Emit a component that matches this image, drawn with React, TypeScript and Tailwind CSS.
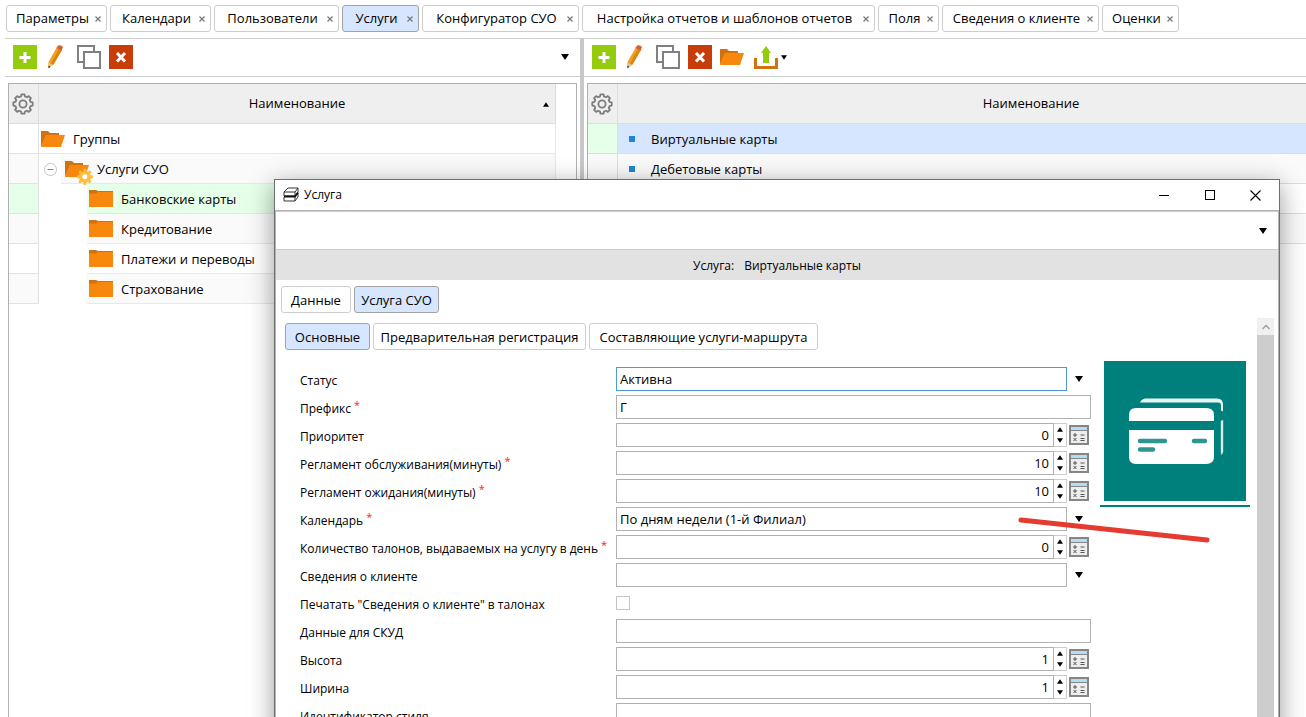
import React, { useState } from "react";

interface TabItem {
  name: string;
  width: string;
}

interface TreeItem {
  name: string;
  indent: string;
  icon: "open" | "gear" | "closed";
  bg: string;
}

interface Field {
  id: string;
  label: string;
  kind: "select" | "text" | "number" | "checkbox";
  value?: string;
  required?: boolean;
  active?: boolean;
}

const tabs: TabItem[] = [
  { name: "Параметры", width: "w-[101px]" },
  { name: "Календари", width: "w-[101px]" },
  { name: "Пользователи", width: "w-[125px]" },
  { name: "Услуги", width: "w-[77px]" },
  { name: "Конфигуратор СУО", width: "w-[157px]" },
  { name: "Настройка отчетов и шаблонов отчетов", width: "w-[293px]" },
  { name: "Поля", width: "w-[61px]" },
  { name: "Сведения о клиенте", width: "w-[157px]" },
  { name: "Оценки", width: "w-[77px]" },
];

const tree: TreeItem[] = [
  { name: "Группы", indent: "pl-0", icon: "open", bg: "bg-white" },
  { name: "Услуги СУО", indent: "pl-6", icon: "gear", bg: "bg-[#fafafa]" },
  { name: "Банковские карты", indent: "pl-12", icon: "closed", bg: "bg-[#e5ffe8]" },
  { name: "Кредитование", indent: "pl-12", icon: "closed", bg: "bg-[#fafafa]" },
  { name: "Платежи и переводы", indent: "pl-12", icon: "closed", bg: "bg-white" },
  { name: "Страхование", indent: "pl-12", icon: "closed", bg: "bg-[#fafafa]" },
];

const services = ["Виртуальные карты", "Дебетовые карты", "", ""];

const fields: Field[] = [
  { id: "status", label: "Статус", kind: "select", value: "Активна", active: true },
  { id: "prefix", label: "Префикс", kind: "text", value: "Г", required: true },
  { id: "priority", label: "Приоритет", kind: "number", value: "0" },
  { id: "serve", label: "Регламент обслуживания(минуты)", kind: "number", value: "10", required: true },
  { id: "wait", label: "Регламент ожидания(минуты)", kind: "number", value: "10", required: true },
  { id: "calendar", label: "Календарь", kind: "select", value: "По дням недели (1-й Филиал)", required: true },
  { id: "tickets", label: "Количество талонов, выдаваемых на услугу в день", kind: "number", value: "0", required: true },
  { id: "client", label: "Сведения о клиенте", kind: "select", value: "" },
  { id: "print", label: 'Печатать "Сведения о клиенте" в талонах', kind: "checkbox" },
  { id: "skud", label: "Данные для СКУД", kind: "text", value: "" },
  { id: "height", label: "Высота", kind: "number", value: "1" },
  { id: "width", label: "Ширина", kind: "number", value: "1" },
  { id: "style", label: "Идентификатор стиля", kind: "text", value: "" },
];

// outline of a cog with eight teeth around (12, 12)
const cogPoints = (outer: number, inner: number) =>
  Array.from({ length: 8 })
    .flatMap((_, i) =>
      [
        [-15, inner],
        [-9, outer],
        [9, outer],
        [15, inner],
      ].map(([deg, r]) => {
        const a = ((i * 45 + deg) * Math.PI) / 180;
        return `${(12 + r * Math.sin(a)).toFixed(2)},${(12 - r * Math.cos(a)).toFixed(2)}`;
      })
    )
    .join(" ");

function Cog() {
  return (
    <svg className="ml-[2px] block h-6 w-6" viewBox="0 0 24 24" fill="none" stroke="#7c7c7c" strokeWidth="1.8" strokeLinejoin="round">
      <polygon points={cogPoints(9.8, 7.8)} />
      <circle cx="12" cy="12" r="3.6" />
    </svg>
  );
}

function Down({ small }: { small?: boolean }) {
  return (
    <svg className={small ? "h-[5px] w-[6px]" : "h-[6px] w-[8px]"} viewBox="0 0 8 6">
      <path d="M0 0h8L4 6z" />
    </svg>
  );
}

function Up() {
  return (
    <svg className="h-[5px] w-[6px]" viewBox="0 0 8 6">
      <path d="M0 6h8L4 0z" />
    </svg>
  );
}

function OpenFolder() {
  return (
    <svg className="h-4 w-6" viewBox="0 0 24 16">
      <path d="M0 0h7l2 2h9v3H5L0 16z" fill="#d0720f" />
      <path d="M5 4h19l-4 12H0z" fill="#f7870d" />
    </svg>
  );
}

function FolderIcon({ icon }: { icon: TreeItem["icon"] }) {
  if (icon === "closed") {
    return (
      <svg className="h-[17px] w-6" viewBox="0 0 24 17">
        <path d="M0 0h7l2 1h15v6H0z" fill="#d0720f" />
        <path d="M0 3.500h7l2-1.500h15v15H0z" fill="#f7870d" />
      </svg>
    );
  }
  if (icon === "gear") {
    return (
      <svg className="mt-2 h-6 w-7" viewBox="0 0 28 24">
        <path d="M0 0h7l2 2h9v3H5L0 16z" fill="#d0720f" />
        <path d="M5 4h19l-4 12H0z" fill="#f7870d" />
        <g transform="translate(10.500 6.500) scale(0.78)">
          <polygon points={cogPoints(10.5, 7.6)} fill="#ffbe3d" />
          <circle cx="12" cy="12" r="3.200" fill="#fff" />
        </g>
      </svg>
    );
  }
  return <OpenFolder />;
}

function BaseTools() {
  return (
    <>
      <button aria-label="Добавить" className="h-6 w-6">
        <svg viewBox="0 0 24 24">
          <path d="M0 0h24v24H0z" fill="#94cb0c" />
          <path d="M12 7v11M6.500 12.500h11" stroke="#fff" strokeWidth="3" />
        </svg>
      </button>
      <button aria-label="Изменить" className="ml-2 h-6 w-6">
        <svg viewBox="0 0 24 24">
          <path d="M3.500 17L12 2l5 3L8.500 19.500l-5 3z" fill="#f0a023" />
          <path d="M3.500 17.500l4.500 2.500-4.500 3z" fill="#f1c47c" />
          <path d="M3.500 20.500l2 1.200-2 1.800z" fill="#333" />
          <path d="M11.500 3l1.500-2.500q3-1 5 1.500l-1.500 4z" fill="#d95f32" />
          <path d="M14 4L6 18.500l2.500 1 8-14z" fill="#d98410" />
        </svg>
      </button>
      <button aria-label="Копировать" className="ml-2 h-6 w-6">
        <svg viewBox="0 0 24 24" fill="#fff" stroke="#808080" strokeWidth="2">
          <path d="M1 1h16v16H1z" />
          <path d="M7 7h16v16H7z" />
        </svg>
      </button>
      <button aria-label="Удалить" className="ml-2 h-6 w-6">
        <svg viewBox="0 0 24 24">
          <path d="M0 0h24v24H0z" fill="#c73c09" />
          <path d="M8 8l8 8.500M16 8l-8 8.500" stroke="#fff" strokeWidth="3" />
        </svg>
      </button>
    </>
  );
}

function Calc() {
  return (
    <svg className="h-5 w-5" viewBox="0 0 20 20">
      <path d="M1 1h18v18H1z" fill="#ededed" stroke="#868686" strokeWidth="2" />
      <path d="M2 2h16v3H2z" fill="#b4dcf5" />
      <path d="M2 5.500h16" stroke="#868686" />
      <path d="M4 10h4M6 8v4M11.500 10h4M11.500 13.500h4M11.500 15.500h4M4.500 13l3 3M7.500 13l-3 3" stroke="#555" />
    </svg>
  );
}

function FieldRow({ field }: { field: Field }) {
  const [value, setValue] = useState(field.value ?? "");
  const border = field.active ? "border-[#4f98e0]" : "border-[#b0b0b0]";
  const step = (n: number) => setValue(String(Number(value) + n));

  return (
    <div className="flex h-7 items-start">
      <label htmlFor={field.id} className="flex h-7 w-[316px] shrink-0 items-center whitespace-nowrap text-xs">
        {field.label}
        {field.required && <span className="ml-[3px] self-start pt-[2px] text-[11px] leading-4 text-[#ff2020]">*</span>}
      </label>
      {field.kind === "select" && (
        <>
          <select
            id={field.id}
            value={value}
            onChange={e => setValue(e.target.value)}
            className={`h-6 min-w-0 flex-1 appearance-none border bg-white px-[3px] pt-[2px] text-[13px] outline-none ${border}`}
          >
            <option>{field.value}</option>
          </select>
          <span className="flex h-6 w-6 items-center justify-center">
            <Down />
          </span>
        </>
      )}
      {field.kind === "text" && (
        <input
          id={field.id}
          value={value}
          onChange={e => setValue(e.target.value)}
          className={`h-6 min-w-0 flex-1 border px-[3px] text-[13px] outline-none ${border}`}
        />
      )}
      {field.kind === "number" && (
        <>
          <input
            id={field.id}
            inputMode="numeric"
            value={value}
            onChange={e => setValue(e.target.value)}
            className={`h-6 min-w-0 flex-1 border px-1 text-right text-[13px] outline-none ${border}`}
          />
          <span className="flex h-6 w-[13px] flex-col border border-l-0 border-[#ccc]">
            <button aria-label="Больше" onClick={() => step(1)} className="flex flex-1 items-center justify-center">
              <Up />
            </button>
            <button aria-label="Меньше" onClick={() => step(-1)} className="flex flex-1 items-center justify-center">
              <Down small />
            </button>
          </span>
          <button aria-label="Калькулятор" className="ml-[2px] mr-[2px] mt-[2px] h-5 w-5">
            <Calc />
          </button>
        </>
      )}
      {field.kind === "checkbox" && (
        <input id={field.id} type="checkbox" className="mt-[5px] h-[14px] w-[14px] appearance-none border border-[#c4c4c4] bg-white" />
      )}
    </div>
  );
}

function CardsPicture() {
  return (
    <div className="w-[150px] shrink-0 border-b-2 border-[#00807c] px-1 pb-1">
      <svg className="block h-[140px] w-[142px]" viewBox="0 0 142 140">
        <path d="M0 0h142v140H0z" fill="#00807c" />
        <path d="M36 41.500q1-3 5-4h72q6 0 6 6v7l-2-1v-5q0-3-3-3z" fill="#e8f5f4" />
        <path d="M117 60l2-1v32l-1.500 3-.5-3z" fill="#e8f5f4" stroke="#9fd0ce" strokeWidth=".5" />
        <path d="M25 60V54q0-7 7-7h70q8 0 8 7v6z" fill="#fff" />
        <path d="M25 69h85v27q0 7-8 7H32q-7 0-7-7z" fill="#fff" />
        <path d="M36 80h25M36 88.500h13M90 80h11" stroke="#2e9692" strokeWidth="4.500" strokeLinecap="round" />
      </svg>
    </div>
  );
}

function ServiceDialog() {
  const tab = "h-[27px] rounded-[3px] border pt-[2px] text-[13px] leading-none whitespace-nowrap";
  const off = "border-[#cdcdcd] bg-white";
  const on = "border-[#a3a3a3] bg-[#d6e6ff]";

  return (
    <section
      role="dialog"
      aria-labelledby="dialog-title"
      className="absolute top-[179px] right-[26px] -bottom-10 left-[274px] flex flex-col border border-[#6e6e6e] bg-white shadow-[0_6px_24px_rgba(0,0,0,0.4)]"
    >
      <header className="flex h-[30px] shrink-0 items-center pr-px pl-2">
        <svg className="h-4 w-4" viewBox="0 0 16 16" fill="none" stroke="#333" strokeWidth="1">
          <path d="M1 5l4-4h10l-3 4zM1 5v4h11V5M15 1v4l-3 4M1 10v4h11v-4M15 6v4l-3 4" />
          <path d="M1 9.500h11l3-4" strokeWidth="1.800" stroke="#111" />
        </svg>
        <h1 id="dialog-title" className="ml-[5px] flex-1 text-xs">
          Услуга
        </h1>
        <button aria-label="Свернуть" className="flex h-full w-[46px] items-center justify-center">
          <span className="h-px w-[10px] bg-black" />
        </button>
        <button aria-label="Развернуть" className="flex h-full w-[45px] items-center justify-center">
          <span className="h-[10px] w-[10px] border border-black" />
        </button>
        <button aria-label="Закрыть" className="flex h-full w-[46px] items-center justify-center">
          <svg className="h-[11px] w-[11px]" viewBox="0 0 11 11" stroke="#000" strokeWidth="1.100">
            <path d="M.5.500l10 10M10.500.500l-10 10" />
          </svg>
        </button>
      </header>

      <div className="flex min-h-0 flex-1 flex-col border border-[#b4b4b4]">
        <div className="flex h-[39px] shrink-0 items-center justify-end border-t border-b border-[#ccc] pr-[11px]">
          <button aria-label="Меню">
            <Down />
          </button>
        </div>
        <div className="flex h-[30px] shrink-0 items-center justify-center gap-[10px] bg-[#e2e2e2] pt-[2px] text-xs">
          <span>Услуга:</span>
          <span>Виртуальные карты</span>
        </div>
        <div className="flex shrink-0 gap-[3px] pt-[6px] pl-[5px]">
          <button className={`w-[70px] ${tab} ${off}`}>Данные</button>
          <button className={`w-[85px] ${tab} ${on}`}>Услуга СУО</button>
        </div>
        <div className="mt-[5px] flex min-h-0 flex-1">
          <div className="min-w-0 flex-1 pt-[5px] pl-[9px]">
            <div className="flex gap-[3px]">
              <button className={`w-[85px] ${tab} ${on}`}>Основные</button>
              <button className={`w-[213px] ${tab} ${off}`}>Предварительная регистрация</button>
              <button className={`w-[229px] ${tab} ${off}`}>Составляющие услуги-маршрута</button>
            </div>
            <div className="flex gap-[9px] pr-[7px]">
              <form className="mt-[17px] min-w-0 flex-1 pl-[15px]">
                {fields.map(field => (
                  <FieldRow key={field.id} field={field} />
                ))}
              </form>
              <div className="mt-[11px]">
                <CardsPicture />
              </div>
            </div>
          </div>
          <div className="mr-1 flex w-[17px] flex-col bg-[#cdcdcd]">
            <span className="flex h-[17px] shrink-0 items-center justify-center bg-[#f0f0f0]">
              <svg className="h-[6px] w-2" viewBox="0 0 8 6" fill="none" stroke="#a0a0a0" strokeWidth="1.500">
                <path d="M.5 5L4 1.500 7.500 5" />
              </svg>
            </span>
          </div>
        </div>
      </div>
    </section>
  );
}

export default function App() {
  const [current, setCurrent] = useState("Услуги");

  return (
    <div className="relative flex h-screen flex-col overflow-hidden bg-white font-['Open_Sans','Noto_Sans',sans-serif] text-[13px] text-black">
      <nav className="flex shrink-0 gap-[3px] pt-[5px] pb-[6px] pl-[6px]">
        {tabs.map(tab => (
          <div
            key={tab.name}
            className={`flex h-[27px] shrink-0 items-center rounded-[3px] border pl-1 ${tab.width} ${
              current === tab.name ? "border-[#a3a3a3] bg-[#d6e6ff]" : "border-[#cdcdcd] bg-white"
            }`}
          >
            <button onClick={() => setCurrent(tab.name)} className="flex min-w-0 flex-1 justify-center pt-px whitespace-nowrap">
              {tab.name}
            </button>
            <button aria-label="Закрыть вкладку" className="mr-1 w-2">
              <svg className="mx-auto h-[6px] w-[6px]" viewBox="0 0 6 6" stroke="#777" strokeWidth="1.200">
                <path d="M.5.500l5 5M5.500.500l-5 5" />
              </svg>
            </button>
          </div>
        ))}
      </nav>

      <main className="flex min-h-0 flex-1 pl-[5px]">
        <div className="w-[575px] shrink-0">
          <div className="flex h-[39px] items-center border-y border-[#ccc] pr-[11px] pb-px pl-2">
            <BaseTools />
            <button aria-label="Меню" className="ml-auto">
              <Down />
            </button>
          </div>
          <div className="mt-[6px] ml-[3px] mr-[3px] h-full border border-[#b0b0b0] pr-[20px]">
            <table className="w-full table-fixed border-separate border-spacing-0">
              <thead>
                <tr className="h-10 bg-[#efefef]">
                  <th aria-label="Настройки" className="w-[30px] border-r border-b border-[#ddd] p-0">
                    <Cog />
                  </th>
                  <th className="border-r border-b border-[#ddd] p-0 font-normal">
                    <div className="flex items-center pt-px pr-[6px] pl-3">
                      <span className="flex-1">Наименование</span>
                      <Up />
                    </div>
                  </th>
                </tr>
              </thead>
              <tbody>
                {tree.map(item => (
                  <tr key={item.name} className="h-[30px]">
                    <td className={`border-r border-b border-[#e2e2e2] p-0 ${item.bg}`} />
                    <td className={`p-0 ${item.indent}`}>
                      <div className="flex items-stretch">
                        {item.icon === "gear" && (
                          <span className="-ml-6 flex w-[22px] items-center justify-center">
                            <svg className="h-[13px] w-[13px]" viewBox="0 0 13 13" fill="none" stroke="#c4c4c4">
                              <circle cx="6.500" cy="6.500" r="6" />
                              <path d="M3.500 6.500h6" stroke="#888" />
                            </svg>
                          </span>
                        )}
                        <div
                          className={`flex h-[30px] flex-1 items-center border-r border-b border-[#e8e8e8] ${item.bg} ${
                            item.icon === "gear" ? "pl-1" : "pl-[2px]"
                          }`}
                        >
                          <span className="flex w-8 shrink-0 items-center">
                            <FolderIcon icon={item.icon} />
                          </span>
                          <span className="pt-[2px]">{item.name}</span>
                        </div>
                      </div>
                    </td>
                  </tr>
                ))}
              </tbody>
            </table>
          </div>
        </div>

        <div className="w-1 shrink-0 bg-[#c8c8c8]" />

        <div className="min-w-0 flex-1 overflow-hidden">
          <div className="flex h-[39px] items-center border-y border-[#ccc] pb-px pl-2">
            <BaseTools />
            <button aria-label="Открыть" className="ml-2">
              <OpenFolder />
            </button>
            <button aria-label="Выгрузить" className="ml-[10px] flex items-center gap-[3px]">
              <svg className="h-6 w-6" viewBox="0 0 24 24">
                <path d="M1.500 13v9.500h21V13" fill="none" stroke="#d0720f" strokeWidth="3" />
                <path d="M9 18V8H7l5-7 5 7h-2v10z" fill="#94cb0c" />
              </svg>
              <Down small />
            </button>
          </div>
          <div className="mt-[6px] ml-[3px] h-full w-[858px] border border-[#b0b0b0]">
            <table className="w-full table-fixed border-separate border-spacing-0">
              <thead>
                <tr className="h-10 bg-[#efefef]">
                  <th aria-label="Настройки" className="w-[30px] border-r border-b border-[#ddd] p-0">
                    <Cog />
                  </th>
                  <th className="border-b border-[#ddd] px-0 pt-px pb-0 font-normal">Наименование</th>
                </tr>
              </thead>
              <tbody>
                {services.map((name, i) => (
                  <tr key={i} className={`h-[30px] ${i === 0 ? "bg-[#d6e6ff]" : i % 2 ? "bg-[#fafafa]" : "bg-white"}`}>
                    <td className={`border-r border-b border-[#ddd] p-0 ${i === 0 ? "bg-[#e5ffe8]" : ""}`} />
                    <td className="border-b border-[#ddd] p-0">
                      {name && (
                        <div className="flex items-center pl-[11px]">
                          <span className="mr-4 h-[6px] w-[6px] bg-[#1b87d6]" />
                          <span className="pt-[2px]">{name}</span>
                        </div>
                      )}
                    </td>
                  </tr>
                ))}
              </tbody>
            </table>
          </div>
        </div>
      </main>

      <ServiceDialog />

      <svg className="pointer-events-none absolute top-[512px] right-[94px] h-9 w-[196px]" viewBox="0 0 196 36">
        <path d="M5 8l186 20" stroke="#e43c30" strokeWidth="5" strokeLinecap="round" />
      </svg>
    </div>
  );
}
